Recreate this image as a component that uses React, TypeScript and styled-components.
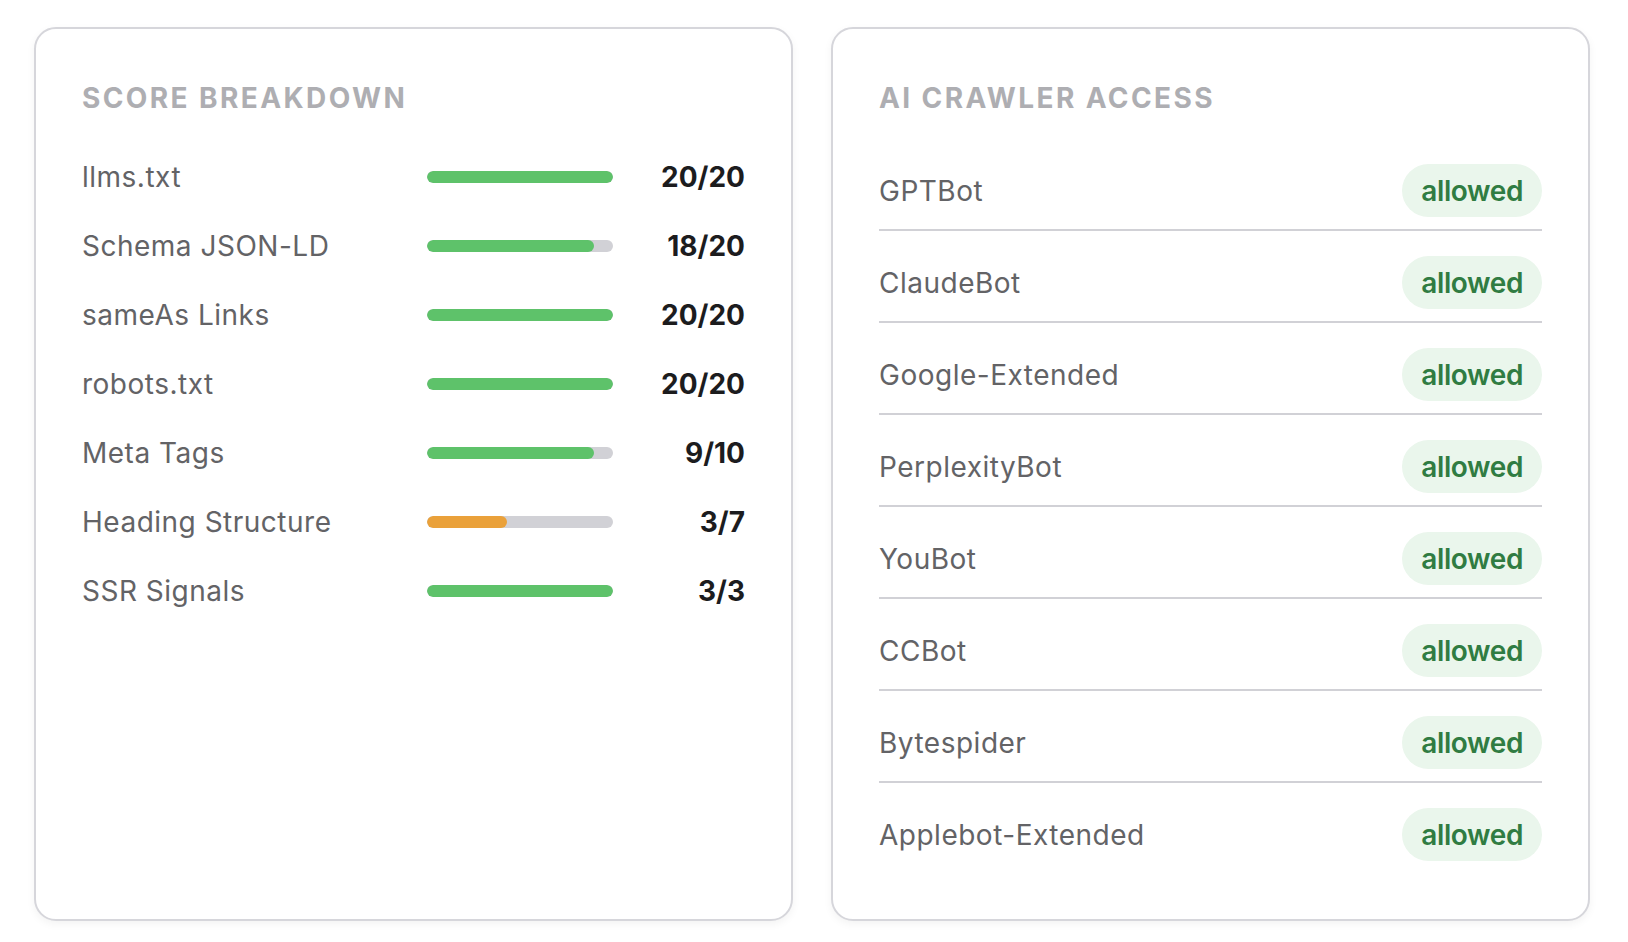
import styled, { createGlobalStyle } from 'styled-components'

const GlobalStyle = createGlobalStyle`
  html, body {
    margin: 0;
    padding: 0;
    background: #ffffff;
  }
  body {
    font-family: Inter, "Noto Sans", "Liberation Sans", sans-serif;
    -webkit-font-smoothing: antialiased;
  }
`

const Page = styled.div`
  display: grid;
  grid-template-columns: 1fr 1fr;
  gap: 38px;
  padding: 27px 38px 23px 34px;
  box-sizing: border-box;
  width: 1628px;
`

const Card = styled.section`
  border: 2px solid #d6d6db;
  border-radius: 22px;
  background: #fff;
  box-shadow: 0 3px 8px rgba(0, 0, 0, 0.05);
  padding: 52px 46px 46px;
  box-sizing: border-box;
`

const Title = styled.h2`
  margin: 0;
  font-size: 28px;
  line-height: 34px;
  font-weight: 700;
  letter-spacing: 2.4px;
  text-transform: uppercase;
  color: #aeaeb2;
`

const ScoreList = styled.div`
  margin-top: 27px;
  display: flex;
  flex-direction: column;
`

const ScoreRow = styled.div`
  display: grid;
  grid-template-columns: 1fr 186px 132px;
  align-items: center;
  height: 69px;
`

const Label = styled.span`
  font-size: 28px;
  line-height: 34px;
  letter-spacing: 0.5px;
  color: #636366;
`

const Track = styled.div`
  height: 12px;
  border-radius: 6px;
  background: #d1d1d6;
  overflow: hidden;
`

const Fill = styled.div<{ $tone: 'good' | 'warn' }>`
  height: 100%;
  border-radius: 6px;
  background: ${p => (p.$tone === 'good' ? '#5ec26a' : '#eaa13a')};
`

const Score = styled.span`
  text-align: right;
  font-size: 28px;
  line-height: 34px;
  font-weight: 700;
  color: #1c1c1e;
`

const CrawlerList = styled.div`
  margin-top: 37px;
  display: flex;
  flex-direction: column;
  gap: 13px;
`

const CrawlerRow = styled.div`
  display: flex;
  align-items: center;
  justify-content: space-between;
  padding: 12px 0;
  border-bottom: 2px solid #d1d1d6;

  &:last-child {
    border-bottom: none;
  }
`

const BotName = styled.span`
  font-size: 28px;
  line-height: 34px;
  letter-spacing: 0.5px;
  color: #636366;
`

const Pill = styled.span`
  display: inline-flex;
  align-items: center;
  height: 53px;
  padding: 0 19px;
  border-radius: 27px;
  background: #eaf6ec;
  color: #307c42;
  font-size: 28px;
  font-weight: 600;
  letter-spacing: -0.4px;
`

const scores = [
  { name: 'llms.txt', got: 20, max: 20 },
  { name: 'Schema JSON-LD', got: 18, max: 20 },
  { name: 'sameAs Links', got: 20, max: 20 },
  { name: 'robots.txt', got: 20, max: 20 },
  { name: 'Meta Tags', got: 9, max: 10 },
  { name: 'Heading Structure', got: 3, max: 7 },
  { name: 'SSR Signals', got: 3, max: 3 },
]

const crawlers = [
  'GPTBot',
  'ClaudeBot',
  'Google-Extended',
  'PerplexityBot',
  'YouBot',
  'CCBot',
  'Bytespider',
  'Applebot-Extended',
]

const App = () => {
  return (
    <>
      <GlobalStyle />
      <Page>
        <Card>
          <Title>Score Breakdown</Title>
          <ScoreList>
            {scores.map(s => {
              const ratio = s.got / s.max
              return (
                <ScoreRow key={s.name}>
                  <Label>{s.name}</Label>
                  <Track>
                    <Fill $tone={ratio >= 0.7 ? 'good' : 'warn'} style={{ width: `${ratio * 100}%` }} />
                  </Track>
                  <Score>{s.got}/{s.max}</Score>
                </ScoreRow>
              )
            })}
          </ScoreList>
        </Card>

        <Card>
          <Title>AI Crawler Access</Title>
          <CrawlerList>
            {crawlers.map(c => (
              <CrawlerRow key={c}>
                <BotName>{c}</BotName>
                <Pill>allowed</Pill>
              </CrawlerRow>
            ))}
          </CrawlerList>
        </Card>
      </Page>
    </>
  )
}

export default App
